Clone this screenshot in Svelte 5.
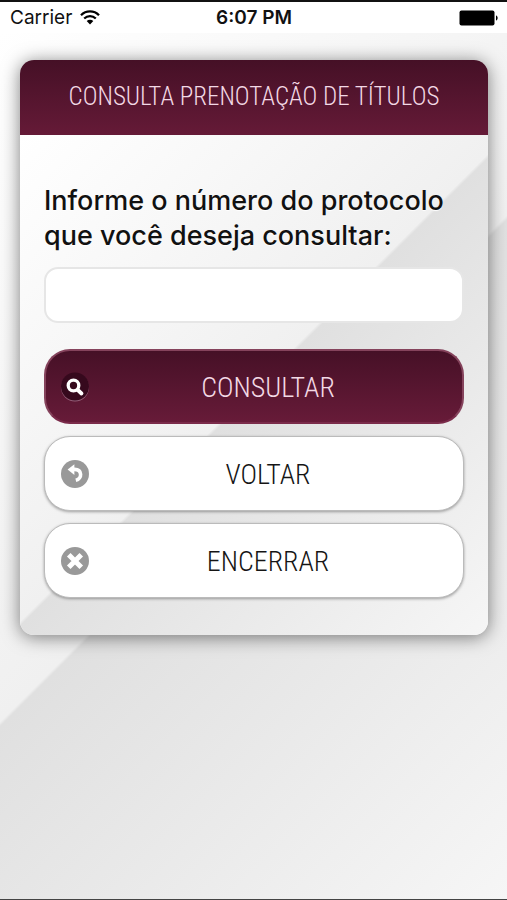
<script lang="ts">
  let protocol = $state("");

  function submit(event: SubmitEvent) {
    event.preventDefault();
  }
</script>

<div class="screen">
  <div class="status-bar">
    <div class="carrier">
      <span>Carrier</span>
      <svg width="20" height="15" viewBox="0 0 20 15" aria-hidden="true">
        <g fill="none" stroke="#000" stroke-width="2.3">
          <path d="M1 5.2C6 0.2 14 0.2 19 5.2" />
          <path d="M4.2 8.5C7.5 5.4 12.5 5.4 15.8 8.5" />
        </g>
        <path d="M6.7 11C8.6 9.3 11.4 9.3 13.3 11L10 14.5Z" />
      </svg>
    </div>
    <strong>6:07 PM</strong>
    <svg class="battery" width="39" height="16" viewBox="0 0 39 16" aria-hidden="true">
      <rect x="0.5" y="0.5" width="35" height="15" rx="2" />
      <path d="M37 5.5C39.2 6 39.2 10 37 10.5Z" />
    </svg>
  </div>

  <main>
    <form class="card" onsubmit={submit}>
      <h1>CONSULTA PRENOTAÇÃO DE TÍTULOS</h1>
      <div class="card-body">
        <label for="protocol">Informe o número do protocolo que você deseja consultar:</label>
        <input id="protocol" type="text" inputmode="numeric" bind:value={protocol} />
        <div class="actions">
          <button class="primary" type="submit">
            <svg width="28" height="30" viewBox="0 0 28 30" aria-hidden="true">
              <circle cx="14" cy="15.5" r="14" fill="#96607a" />
              <circle cx="14" cy="14.5" r="14" fill="#36091d" />
              <circle cx="12.5" cy="13.5" r="5.3" fill="none" stroke="#fff" stroke-width="3.3" />
              <path d="M16.8 18L20.5 21.5" stroke="#fff" stroke-width="3.8" stroke-linecap="round" />
            </svg>
            <span>CONSULTAR</span>
          </button>
          <button type="button">
            <svg width="28" height="28" viewBox="0 0 28 28" aria-hidden="true">
              <circle cx="14" cy="14" r="14" fill="#999" />
              <path
                d="M11 9.4H13.5C21.4 9.6 21.4 18.6 14.8 20.2"
                fill="none"
                stroke="#fff"
                stroke-width="3.6"
              />
              <path d="M6.6 9.6L13.4 4.2V15Z" fill="#fff" />
            </svg>
            <span>VOLTAR</span>
          </button>
          <button type="button">
            <svg width="28" height="28" viewBox="0 0 28 28" aria-hidden="true">
              <circle cx="14" cy="14" r="14" fill="#999" />
              <path
                d="M9.5 9.5L18.5 18.5M18.5 9.5L9.5 18.5"
                stroke="#fff"
                stroke-width="5"
                stroke-linecap="square"
              />
            </svg>
            <span>ENCERRAR</span>
          </button>
        </div>
      </div>
    </form>
  </main>
</div>

<style>
  :global(body) {
    margin: 0;
  }

  .screen {
    /* diagonal split shared by the page and the card */
    --sheen: linear-gradient(
      135deg,
      #fff 0%,
      #f0f0f0 calc(50% + 2px),
      #e0e0e0 calc(50% + 5px),
      #f6f6f6 100%
    );
    display: flex;
    flex-direction: column;
    box-sizing: border-box;
    min-height: 100vh;
    border-top: 2px solid #111;
    border-bottom: 1px solid #444;
    font-family: Inter, "Liberation Sans", sans-serif;
  }

  .status-bar {
    display: grid;
    grid-template-columns: 1fr auto 1fr;
    align-items: center;
    height: 31px;
    padding: 0 9px 0 10px;
    background: #fff;
    color: #111;
    font-size: 19px;
  }

  .status-bar strong {
    font-size: 19px;
    font-weight: 600;
  }

  .carrier {
    display: flex;
    align-items: center;
    gap: 8px;
  }

  .battery {
    justify-self: end;
  }

  main {
    flex: 1;
    padding: 27px 19px 27px 20px;
    background: var(--sheen);
  }

  .card {
    overflow: hidden;
    border-radius: 14px;
    background: #fff;
    box-shadow: 0 2px 18px rgba(0, 0, 0, 0.5);
  }

  h1 {
    margin: 0;
    padding: 19px 12px 20px;
    background: linear-gradient(#451026, #651a37);
    color: #f3d9e5;
    font-family: "Roboto Condensed", "Liberation Sans Narrow", Roboto, sans-serif;
    font-size: 25px;
    font-weight: 300;
    line-height: 36px;
    text-align: center;
  }

  .card-body {
    display: flex;
    flex-direction: column;
    padding: 48px 24px 37px;
    background: var(--sheen);
  }

  label {
    color: #111;
    font-size: 27px;
    font-weight: 500;
    line-height: 35px;
    text-shadow: 0 1px 1px #fff;
  }

  input {
    box-sizing: border-box;
    width: 100%;
    height: 56px;
    margin-top: 14px;
    padding: 0 16px;
    border: 2px solid #e6e6e6;
    border-radius: 14px;
    background: #fff;
    font: inherit;
    font-size: 25px;
  }

  .actions {
    display: flex;
    flex-direction: column;
    gap: 12px;
    margin-top: 26px;
  }

  button {
    display: flex;
    align-items: center;
    box-sizing: border-box;
    min-height: 75px;
    padding: 0 16px;
    border: 1px solid #bbb;
    border-radius: 26px;
    background: #fff;
    box-shadow: 0 1px 3px rgba(0, 0, 0, 0.35);
    color: #151515;
    font-family: "Roboto Condensed", "Liberation Sans Narrow", Roboto, sans-serif;
    font-size: 28px;
    font-weight: 300;
    cursor: pointer;
  }

  button span {
    flex: 1;
    padding-top: 2px;
    text-align: center;
  }

  button svg {
    flex: none;
  }

  .primary {
    border: 2px solid;
    border-color: #85435c #85435c #7a2b4a;
    padding: 0 15px;
    background: linear-gradient(#451026, #681b39) border-box;
    box-shadow: none;
    color: #f3d9e5;
  }
</style>
